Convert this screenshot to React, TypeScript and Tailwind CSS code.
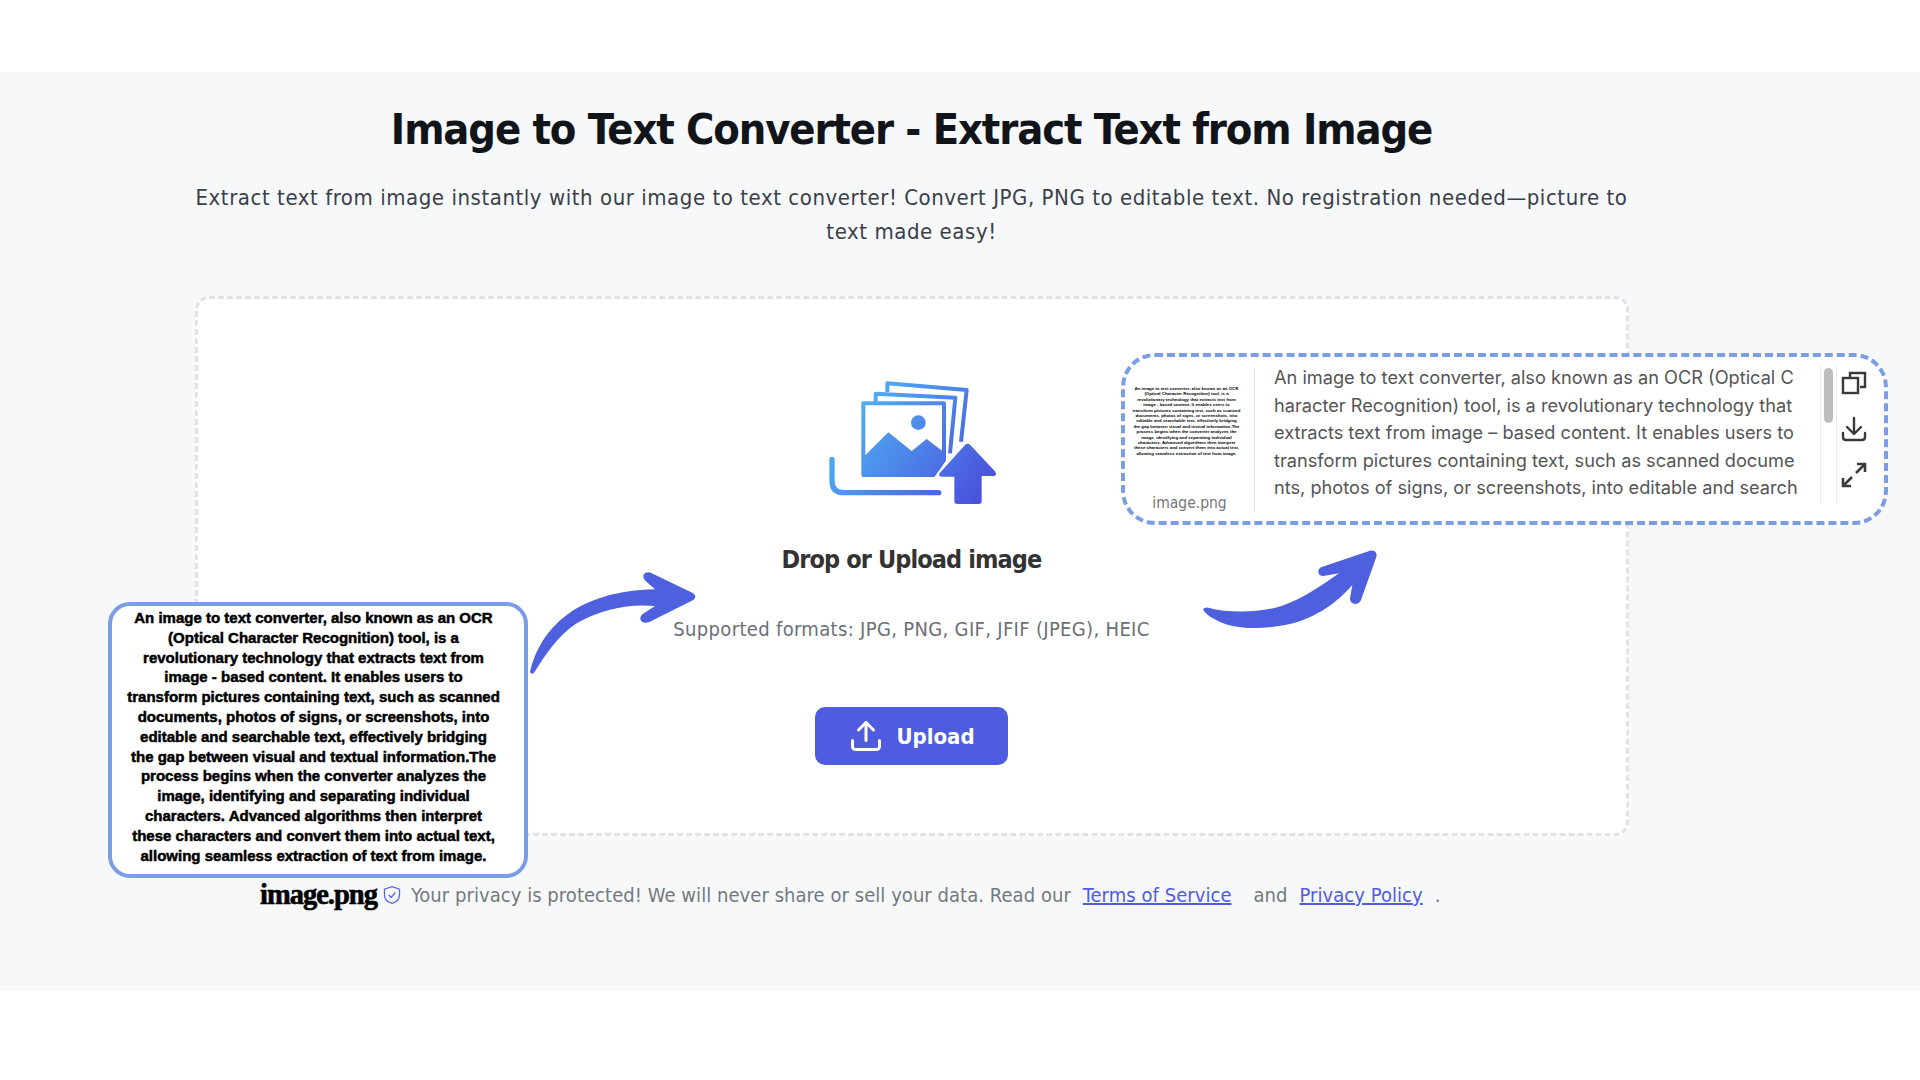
import React from 'react'
import { Upload } from 'lucide-react'

const sampleLines = [
  'An image to text converter, also known as an OCR',
  '(Optical Character Recognition) tool, is a',
  'revolutionary technology that extracts text from',
  'image - based content. It enables users to',
  'transform pictures containing text, such as scanned',
  'documents, photos of signs, or screenshots, into',
  'editable and searchable text, effectively bridging',
  'the gap between visual and textual information.The',
  'process begins when the converter analyzes the',
  'image, identifying and separating individual',
  'characters. Advanced algorithms then interpret',
  'these characters and convert them into actual text,',
  'allowing seamless extraction of text from image.',
]

const UploadArt = () => (
  <svg width="260" height="160" viewBox="0 0 780 480" fill="none">
    <defs>
      <linearGradient id="art" gradientUnits="userSpaceOnUse" x1="150" y1="70" x2="640" y2="430">
        <stop offset="0" stopColor="#4fc6f8" />
        <stop offset="1" stopColor="#4a48da" />
      </linearGradient>
    </defs>
    <path d="M322 96 V70 L560 90 L543 245" stroke="url(#art)" strokeWidth="12" strokeLinejoin="round" />
    <path d="M287 125 V101 L526 113 L510 280" stroke="url(#art)" strokeWidth="12" strokeLinejoin="round" />
    <path d="M250 130 H492 V300 L460 345 H250 Z" stroke="url(#art)" strokeWidth="12" strokeLinejoin="round" />
    <path d="M254 287 L325 217 L395 273 L440 237 L490 275 V300 L460 345 H254 Z" fill="url(#art)" />
    <circle cx="415" cy="188" r="22" fill="url(#art)" />
    <path d="M156 298 V362 Q156 398 192 398 H476" stroke="url(#art)" strokeWidth="16" strokeLinecap="round" />
    <path
      d="M555 255 Q563 247 571 255 L646 335 Q652 348 640 348 H605 V423 Q605 432 596 432 H532 Q523 432 523 423 V350 H486 Q472 348 480 338 Z"
      fill="url(#art)"
    />
  </svg>
)

const ArrowLeft = () => (
  <svg width="190" height="125" viewBox="0 0 570 375" className="absolute left-[520px] top-[560px]">
    <path
      d="M30 335 C45 270 80 210 140 165 C200 120 290 90 405 88 L376 62 C362 45 375 32 392 38 L520 100 Q532 110 520 120 L388 186 C365 195 352 175 368 162 L405 138 C320 130 240 150 170 190 C115 225 80 280 42 338 Q34 345 30 335 Z"
      fill="#4e60de"
    />
  </svg>
)

const ArrowRight = () => (
  <svg width="190" height="100" viewBox="0 0 570 300" className="absolute left-[1195px] top-[540px]">
    <path
      d="M24 208 Q28 201 40 203 C95 218 170 218 235 205 C300 190 370 145 432 100 L385 108 C368 108 365 90 378 82 L525 32 Q545 30 545 48 L498 180 C490 198 465 195 465 175 L472 135 C420 195 350 240 270 255 C200 268 130 268 85 250 C60 240 35 228 24 208 Z"
      fill="#4e60de"
    />
  </svg>
)

const App: React.FC = () => {
  return (
    <div className="relative w-full h-[1080px] bg-white font-['DejaVu_Sans',sans-serif] [font-stretch:condensed] overflow-hidden">
      <div className="h-[72px]" />
      <main className="h-[919px] bg-[#f7f8fa] pr-[97px] flex flex-col items-center">
        <h1 className="mt-[29px] text-[43px] leading-[56px] font-bold text-[#111418] tracking-[-1.1px] whitespace-nowrap">
          Image to Text Converter - Extract Text from Image
        </h1>
        <p className="mt-[24px] w-[1440px] text-center text-[22px] leading-[34px] text-[#3b4048] tracking-[0.55px]">
          Extract text from image instantly with our image to text converter! Convert JPG, PNG to editable text. No registration needed—picture to text made easy!
        </p>
        <section className="mt-[47px] w-[1434px] h-[540px] bg-white border-[3px] border-dashed border-[#e2e2e2] rounded-[14px] flex flex-col items-center">
          <div className="mt-[61px] mr-[3px]">
            <UploadArt />
          </div>
          <h2 className="mt-[22px] text-[25px] leading-[36px] font-bold text-[#333] tracking-[-0.9px]">Drop or Upload image</h2>
          <p className="mt-[36px] text-[20px] leading-[30px] text-[#6b6f75] tracking-[0.33px]">
            Supported formats: JPG, PNG, GIF, JFIF (JPEG), HEIC
          </p>
          <button className="mt-[63px] w-[193px] h-[58px] rounded-[10px] bg-[#4f5ce0] flex items-center justify-center gap-[12px] text-white text-[22px] font-bold">
            <Upload size={36} strokeWidth={2} />
            Upload
          </button>
        </section>
        <p className="mt-[44px] ml-[260px] self-start flex items-center text-[20px] leading-[30px] text-[#74787f] tracking-[0.05px] whitespace-nowrap">
          <span className="font-['Liberation_Serif',serif] font-bold text-[28.5px] leading-[28px] text-black tracking-[-1px] [-webkit-text-stroke:0.6px_black]">image.png</span>
          <svg width="20" height="22" viewBox="0 0 24 24" fill="none" stroke="#5b6ae0" strokeWidth="1.6" className="ml-[5px] mr-[9px]">
            <path d="M12 2 L21 5 V12 C21 17 17 20.5 12 22 C7 20.5 3 17 3 12 V5 Z" />
            <path d="M8 12 L11 15 L16 9" />
          </svg>
          Your privacy is protected! We will never share or sell your data. Read our
          <a className="ml-[12px] underline text-[#4f5ce0]">Terms of Service</a>
          <span className="ml-[22px]">and</span>
          <a className="ml-[12px] underline text-[#4f5ce0]">Privacy Policy</a>
          <span className="ml-[12px]">.</span>
        </p>
      </main>

      <ArrowLeft />
      <ArrowRight />

      <div className="absolute left-[108px] top-[602px] w-[420px] h-[276px] bg-white border-[4px] border-[#7a9de6] rounded-[22px] pt-[2px] pr-[9px] text-center text-[15px] leading-[19.8px] font-bold text-black font-['Liberation_Sans',sans-serif] [font-stretch:normal] [-webkit-text-stroke:0.5px_black] whitespace-nowrap">
        {sampleLines.map((line) => (
          <div key={line}>{line}</div>
        ))}
      </div>

      <div className="absolute left-[1121px] top-[353px] w-[767px] h-[172px] bg-white border-[4px] border-dashed border-[#7a9de6] rounded-[34px] flex">
        <div className="w-[129px] flex flex-col items-center">
          <div className="mt-[29px] ml-[-6px] text-center text-[4.35px] leading-[5.4px] font-bold text-black font-['Liberation_Sans',sans-serif] [font-stretch:normal] whitespace-nowrap">
            {sampleLines.map((line) => (
              <div key={line}>{line}</div>
            ))}
          </div>
          <span className="mt-auto mb-[8px] text-[15.5px] leading-[20px] text-[#777]">image.png</span>
        </div>
        <div className="mt-[10px] mb-[8px] w-[1px] bg-[#e3e3e3]" />
        <div className="w-[565px] pl-[19px] pt-[7px] h-[146px] overflow-hidden text-[18.2px] leading-[27.6px] text-[#555] font-['Inter',sans-serif] [font-stretch:normal] whitespace-nowrap">
          <div>An image to text converter, also known as an OCR (Optical C</div>
          <div>haracter Recognition) tool, is a revolutionary technology that</div>
          <div>extracts text from image – based content. It enables users to</div>
          <div>transform pictures containing text, such as scanned docume</div>
          <div>nts, photos of signs, or screenshots, into editable and search</div>
        </div>
        <div className="mt-[8px] mb-[18px] w-[17px] border-l border-r border-[#ececec] relative">
          <div className="absolute left-[3px] top-[3px] w-[9px] h-[55px] rounded-full bg-[#bdbdbd]" />
        </div>
        <div className="flex-1 flex flex-col items-center pt-[13px] gap-[20px] pr-[14px]">
          <svg width="26" height="26" viewBox="0 0 26 26" fill="none" stroke="#3a3a3a" strokeWidth="2.4">
            <rect x="2" y="8" width="15" height="15" />
            <path d="M9 7 V3 H24 V17 H19" />
          </svg>
          <svg width="26" height="26" viewBox="0 0 26 26" fill="none" stroke="#3a3a3a" strokeWidth="2.4" strokeLinecap="round" strokeLinejoin="round">
            <path d="M13 2 V17 M6 11 L13 18 L20 11" />
            <path d="M2 17 V21 Q2 24 5 24 H21 Q24 24 24 21 V17" />
          </svg>
          <svg width="26" height="26" viewBox="0 0 26 26" fill="none" stroke="#3a3a3a" strokeWidth="2.6">
            <path d="M15 11 L24 2 M16 2 H24 V10" />
            <path d="M11 15 L2 24 M2 16 V24 H10" />
          </svg>
        </div>
      </div>
    </div>
  )
}

export default App
